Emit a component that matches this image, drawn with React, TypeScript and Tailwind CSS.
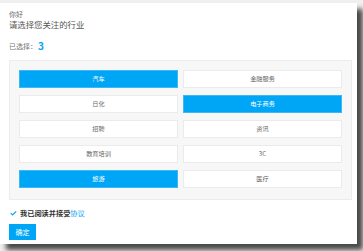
import React from 'react';
import { Check } from 'lucide-react';

const industries = [
  { name: '汽车', selected: true },
  { name: '金融服务', selected: false },
  { name: '日化', selected: false },
  { name: '电子商务', selected: true },
  { name: '招聘', selected: false },
  { name: '资讯', selected: false },
  { name: '教育培训', selected: false },
  { name: '3C', selected: false },
  { name: '旅游', selected: true },
  { name: '医疗', selected: false },
];

export default function App() {
  const count = industries.filter((i) => i.selected).length;

  return (
    <div
      className="h-[251px] w-[363px] overflow-hidden bg-[#f0f0f0] pt-[3px]"
      style={{ fontFamily: '"Noto Sans CJK SC", "Noto Sans", sans-serif' }}
    >
      <div className="h-[241px] w-[357px] bg-white px-[9px] pt-[7px] shadow-[6px_6px_5px_rgba(0,0,0,0.7)]">
        <div className="text-[7px] leading-[8px] text-[#666]">你好</div>
        <div className="mt-[1px] text-[8.4px] leading-[11px] text-[#555]">请选择您关注的行业</div>

        <div className="mt-[10px] flex items-center text-[7px] leading-[12px] text-[#777]">
          已选择：
          <span className="ml-[1px] text-[10px] font-bold text-[#0aa5f3]">{count}</span>
        </div>

        <div className="mt-[8px] grid h-[140px] w-[343px] grid-cols-2 content-start gap-x-[5px] gap-y-[7px] border border-[#ececec] bg-[#f7f7f7] px-[9px] pt-[9px]">
          {industries.map((item) => (
            <div
              key={item.name}
              className={`flex h-[18px] items-center justify-center border text-[6.2px] ${
                item.selected
                  ? 'border-[#3db8f5] bg-[#00a6f6] text-white'
                  : 'border-[#ebebeb] bg-white text-[#666]'
              }`}
            >
              {item.name}
            </div>
          ))}
        </div>

        <div className="mt-[8px] flex items-center gap-[3px] pl-[1px] text-[7.2px] font-bold leading-[10px] text-[#333]">
          <Check className="h-[7px] w-[7px] text-[#0aa5f3]" strokeWidth={4} />
          <span>
            我已阅读并接受<span className="font-normal text-[#0aa5f3]">协议</span>
          </span>
        </div>

        <button className="mt-[6px] flex h-[16px] w-[27px] items-center justify-center bg-[#00a6f6] text-[7px] text-white">
          确定
        </button>
      </div>
    </div>
  );
}
